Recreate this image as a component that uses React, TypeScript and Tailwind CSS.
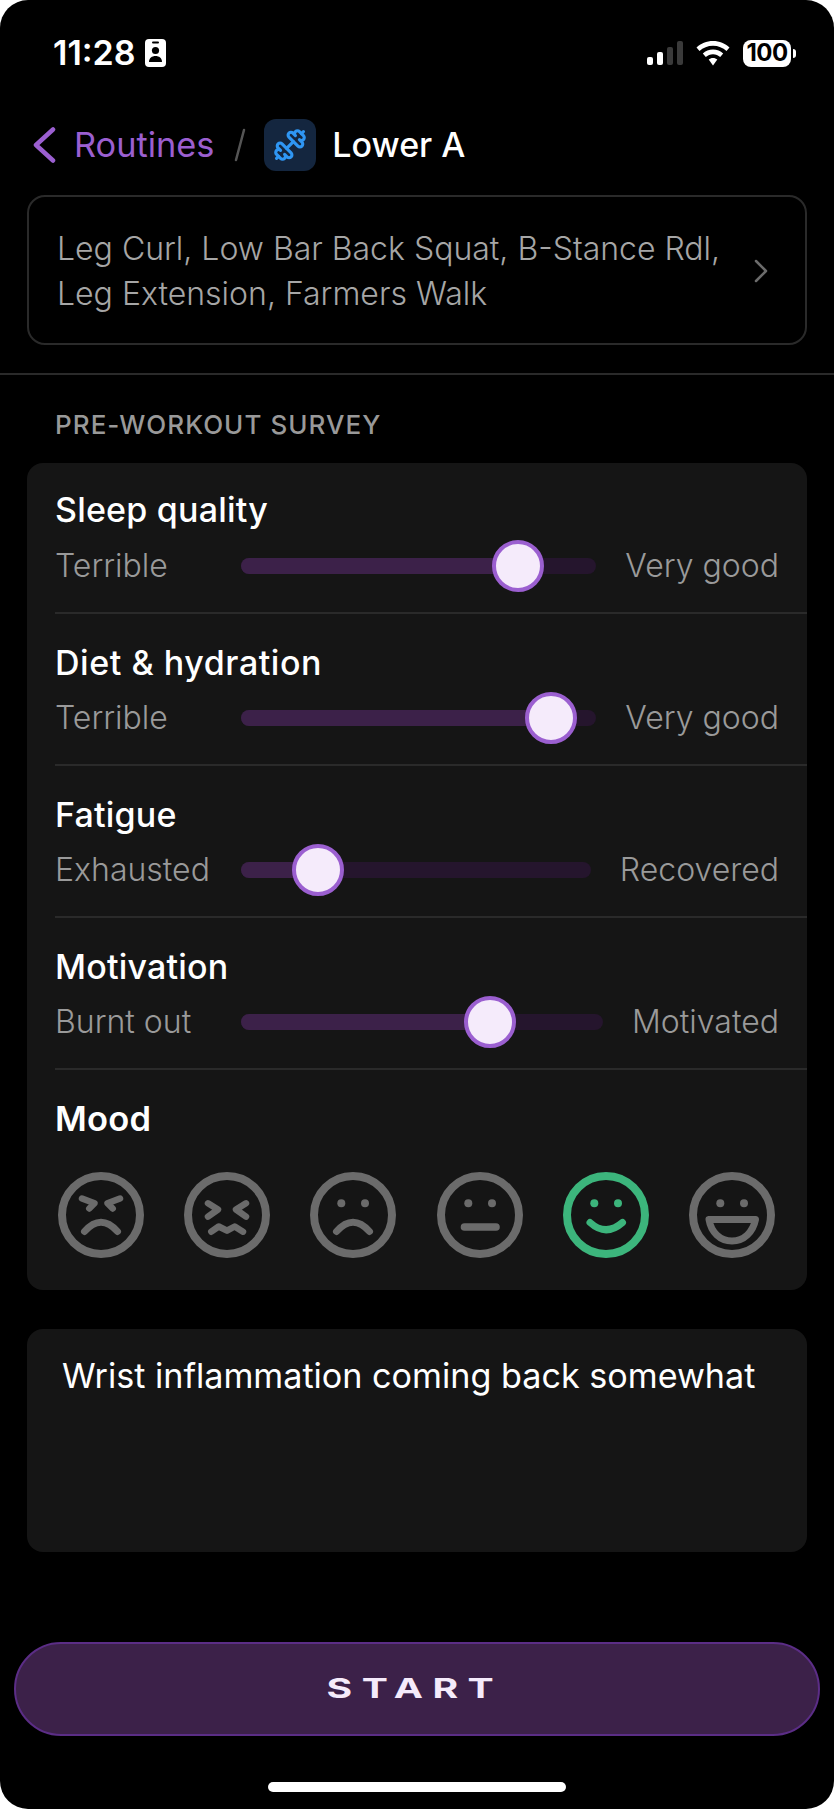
import { Dumbbell, ChevronRight } from "lucide-react";

const font = { fontFamily: "Inter, sans-serif" };

function Slider({ left, right, pct }: { left: string; right: string; pct: number }) {
  return (
    <div className="flex items-center h-[52px]">
      <span className="w-[186px] shrink-0 text-[32px] leading-[40px] font-light text-[#9a9a9a]">{left}</span>
      <div className="relative flex-1 h-[16px] rounded-full bg-[#25152d]">
        <div className="absolute left-0 top-0 h-full rounded-l-full bg-[#3c2149]" style={{ width: `${pct}%` }} />
        <div
          className="absolute top-[-18px] w-[52px] h-[52px] -ml-[26px] rounded-full bg-[#f5ebfb] border-[4px] border-[#9b5fd0]"
          style={{ left: `${pct}%` }}
        />
      </div>
      <span className="ml-[29px] shrink-0 text-[32px] leading-[40px] font-light text-[#9a9a9a]">{right}</span>
    </div>
  );
}

function Row({ title, children, first, wide }: { title: string; children: React.ReactNode; first?: boolean; wide?: boolean }) {
  return (
    <div className={`border-b-[2px] border-[#2a2a2a] ml-[28px] pr-[28px] ${first ? "h-[151px] pt-[24px]" : "h-[152px] pt-[26px]"}`}>
      <div className={`text-[34px] leading-[46px] font-medium text-white h-[46px] ${wide ? "tracking-[0.55px]" : "tracking-[0.2px]"}`}>{title}</div>
      <div className={first ? "mt-[7px]" : "mt-[6px]"}>{children}</div>
    </div>
  );
}

function Face({ color, children }: { color: string; children: React.ReactNode }) {
  return (
    <svg width="86" height="86" viewBox="0 0 86 86" fill="none" stroke={color} strokeWidth="7" strokeLinecap="round" strokeLinejoin="round">
      <circle cx="43" cy="43" r="39" strokeWidth="8" />
      {children}
    </svg>
  );
}

function Eyes({ color }: { color: string }) {
  return (
    <g fill={color} stroke="none">
      <circle cx="31.3" cy="31.3" r="4" />
      <circle cx="55" cy="31.3" r="4" />
    </g>
  );
}

const G = "#6b6b6b";
const GR = "#3cb57c";

export default function App() {
  return (
    <div className="w-[834px] h-[1809px] bg-white" style={font}>
      <div className="relative w-full h-full bg-black rounded-[28px] overflow-hidden">
        {/* status bar */}
        <div className="h-[106px] flex items-center justify-between pl-[53px] pr-[38px]">
          <div className="flex items-center gap-[9px]">
            <span className="text-[34px] leading-none font-semibold text-white">11:28</span>
            <svg width="21" height="28" viewBox="0 0 21 28">
              <rect width="21" height="28" rx="4" fill="#fff" />
              <circle cx="10.500" cy="11.500" r="3.600" fill="#000" />
              <path d="M4 23c0-4 3-6 6.500-6s6.500 2 6.500 6z" fill="#000" />
              <rect x="7" y="2.500" width="7" height="2" rx="1" fill="#000" />
            </svg>
          </div>
          <div className="flex items-center gap-[10px]">
            <div className="flex items-end gap-[4px] h-[24px]">
              <div className="w-[6px] h-[8px] rounded-[2px] bg-white" />
              <div className="w-[6px] h-[13px] rounded-[2px] bg-white" />
              <div className="w-[6px] h-[18px] rounded-[2px] bg-[#3a3a3a]" />
              <div className="w-[6px] h-[24px] rounded-[2px] bg-[#3a3a3a]" />
            </div>
            <svg width="34" height="25" viewBox="0 0 34 25" className="ml-[3px]">
              <path d="M17 0C10.500 0 4.800 2.500 0.500 6.500L3.500 10C7 6.700 11.800 4.700 17 4.700S27 6.700 30.500 10L33.500 6.500C29.200 2.500 23.500 0 17 0Z" fill="#fff" />
              <path d="M17 8.500C13 8.500 9.500 10 6.800 12.500L9.800 16C11.700 14.300 14.200 13.200 17 13.200S22.300 14.300 24.200 16L27.200 12.500C24.500 10 21 8.500 17 8.500Z" fill="#fff" />
              <path d="M17 17C15.300 17 13.800 17.600 12.700 18.600L17 24.500L21.300 18.600C20.200 17.600 18.700 17 17 17Z" fill="#fff" />
            </svg>
            <div className="flex items-center gap-[2px] ml-[3px]">
              <div className="w-[48px] h-[27px] rounded-[8px] bg-white flex items-center justify-center text-[24px] leading-none font-bold text-black tracking-[-0.5px]">100</div>
              <div className="w-[3px] h-[9px] rounded-r-full bg-white" />
            </div>
          </div>
        </div>

        {/* nav */}
        <div className="mt-[13px] h-[52px] flex items-center pl-[33px]">
          <svg width="24" height="36" viewBox="0 0 24 36" fill="none" stroke="#9b5fd0" strokeWidth="4.500" strokeLinecap="round" strokeLinejoin="round">
            <path d="M20 2.500L3 18L20 33.500" />
          </svg>
          <span className="ml-[17px] text-[34.3px] leading-none text-[#9b5fd0]">Routines</span>
          <svg width="12" height="36" viewBox="0 0 12 36" className="ml-[20px]" stroke="#555" strokeWidth="2.500" strokeLinecap="round">
            <path d="M10 3L2 33" />
          </svg>
          <div className="ml-[18px] w-[52px] h-[52px] rounded-[12px] bg-[#14263f] flex items-center justify-center">
            <Dumbbell size={34} color="#2f96f3" strokeWidth={2.2} />
          </div>
          <span className="ml-[16px] text-[34px] leading-none font-medium text-white">Lower A</span>
        </div>

        {/* exercises */}
        <div className="mx-[27px] mt-[24px] h-[150px] rounded-[18px] border-[2px] border-[#2a2a2a] bg-black flex items-center justify-between pl-[28px] pr-[24px] pt-[1px]">
          <div className="text-[32px] leading-[45px] font-light text-[#a6a6a6]">
            Leg Curl, Low Bar Back Squat, B-Stance Rdl,
            <br />
            Leg Extension, Farmers Walk
          </div>
          <ChevronRight size={40} color="#6b6b6b" strokeWidth={1.5} />
        </div>

        <div className="mt-[28px] h-[2px] bg-[#2a2a2a]" />

        <div className="mt-[34px] pl-[55px] text-[26px] leading-[32px] font-medium tracking-[1.05px] text-[#999999]">PRE-WORKOUT SURVEY</div>

        {/* survey */}
        <div className="mx-[27px] mt-[22px] h-[827px] rounded-[16px] bg-[#151515]">
          <Row title="Sleep quality" first>
            <Slider left="Terrible" right="Very good" pct={78} />
          </Row>
          <Row title="Diet & hydration" wide>
            <Slider left="Terrible" right="Very good" pct={87.3} />
          </Row>
          <Row title="Fatigue">
            <Slider left="Exhausted" right="Recovered" pct={22} />
          </Row>
          <Row title="Motivation">
            <Slider left="Burnt out" right="Motivated" pct={68.7} />
          </Row>
          <div className="pl-[28px] pr-[28px] pt-[26px]">
            <div className="text-[34.5px] leading-[46px] font-semibold tracking-[0.2px] text-white">Mood</div>
            <div className="mt-[30px] pl-[3px] pr-[4px] flex justify-between">
              <Face color={G}>
                <path d="M24 26.500L36.500 31.300L31.300 36.500" strokeWidth="6.500" />
                <path d="M62 26.500L49.500 31.300L54.700 36.500" strokeWidth="6.500" />
                <path d="M26.500 59.500Q43 41 59.500 59.500" />
              </Face>
              <Face color={G}>
                <path d="M24 31.300L34 37.500L24 44.600" strokeWidth="6.500" />
                <path d="M62 31.300L52 37.500L62 44.600" strokeWidth="6.500" />
                <path d="M27.300 59.700L34.700 54.500L43 58.700L50.700 54.500L59 59.700" strokeWidth="6.500" />
              </Face>
              <Face color={G}>
                <Eyes color={G} />
                <path d="M26.500 59.500Q43 41 59.500 59.500" />
              </Face>
              <Face color={G}>
                <Eyes color={G} />
                <path d="M27.500 55H59" strokeWidth="7.600" />
              </Face>
              <Face color={GR}>
                <Eyes color={GR} />
                <path d="M27 50.500Q43 65 59.500 50.500" />
              </Face>
              <Face color={G}>
                <Eyes color={G} />
                <path d="M20 47.500H66.500C64 60 55 69 43 69C31 69 22 60 20 47.500Z" />
              </Face>
            </div>
          </div>
        </div>

        {/* notes */}
        <div className="mx-[27px] mt-[39px] h-[223px] rounded-[16px] bg-[#151515] pl-[35px] pt-[24px] text-[34.15px] leading-[46px] text-white">
          Wrist inflammation coming back somewhat
        </div>

        {/* start */}
        <div className="mx-[14px] mt-[90px] h-[94px] rounded-full bg-[#3c2149] border-[2px] border-[#5b2d86] flex items-center justify-center pb-[2px]">
          <span className="text-[27px] leading-none font-bold tracking-[6.5px] text-[#f5ebfb] scale-x-[1.45] -translate-x-[2px]">START</span>
        </div>

        {/* home */}
        <div className="mx-auto mt-[46px] w-[298px] h-[10px] rounded-full bg-white" />
      </div>
    </div>
  );
}
